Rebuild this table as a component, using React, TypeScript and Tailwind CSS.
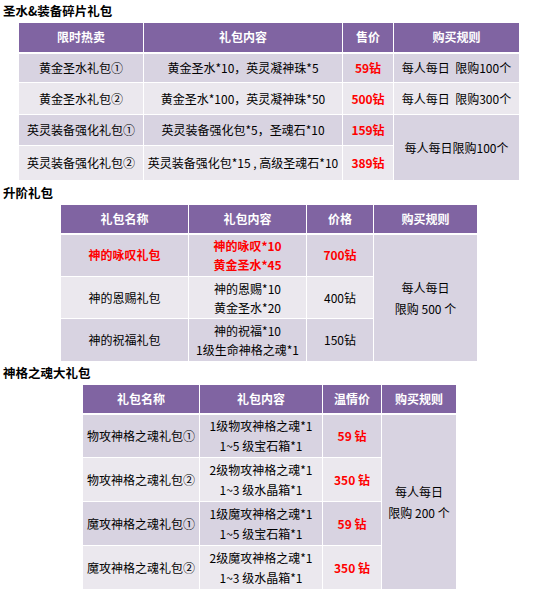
import React from 'react';

const HEAD = 'bg-[#8064a2] text-white font-bold border border-white border-b-2 text-center p-0';
const DARK = 'bg-[#d8d3e1]';
const LIGHT = 'bg-[#ebe8ee]';
const CELL = 'border border-white text-center p-0 whitespace-nowrap';
const RED = 'text-[#ff0000] font-bold';

function Title({ children, h }: { children: React.ReactNode; h: string }) {
  return (
    <div className={`${h} flex items-center pl-[3px] font-bold text-[12.5px] text-black`}>{children}</div>
  );
}

const firstRows = [
  { name: '黄金圣水礼包①', content: '黄金圣水*10，英灵凝神珠*5', price: '59钻', h: 'h-[30px]' },
  { name: '黄金圣水礼包②', content: '黄金圣水*100，英灵凝神珠*50', price: '500钻', h: 'h-[32px]' },
  { name: '英灵装备强化礼包①', content: '英灵装备强化包*5，圣魂石*10', price: '159钻', h: 'h-[31px]' },
  { name: '英灵装备强化礼包②', content: '英灵装备强化包*15 , 高级圣魂石*10', price: '389钻', h: 'h-[35px]' },
];

const upgradeRows = [
  { name: '神的咏叹礼包', lines: ['神的咏叹*10', '黄金圣水*45'], price: '700钻', hot: true, h: 'h-[43px]' },
  { name: '神的恩赐礼包', lines: ['神的恩赐*10', '黄金圣水*20'], price: '400钻', hot: false, h: 'h-[42px]' },
  { name: '神的祝福礼包', lines: ['神的祝福*10', '1级生命神格之魂*1'], price: '150钻', hot: false, h: 'h-[43px]' },
];

const soulRows = [
  { name: '物攻神格之魂礼包①', lines: ['1级物攻神格之魂*1', '1~5 级宝石箱*1'], price: '59 钻' },
  { name: '物攻神格之魂礼包②', lines: ['2级物攻神格之魂*1', '1~3 级水晶箱*1'], price: '350 钻' },
  { name: '魔攻神格之魂礼包①', lines: ['1级魔攻神格之魂*1', '1~5 级宝石箱*1'], price: '59 钻' },
  { name: '魔攻神格之魂礼包②', lines: ['2级魔攻神格之魂*1', '1~3 级水晶箱*1'], price: '350 钻' },
];

export default function App() {
  return (
    <div className="w-[545px] h-[590px] bg-white font-['Microsoft_YaHei','Noto_Sans_CJK_SC',sans-serif] text-[12px] text-black leading-[20px]">
      <Title h="h-[22px]">圣水&amp;装备碎片礼包</Title>
      <table className="ml-[18px] border-collapse table-fixed w-[501px]">
        <colgroup>
          <col className="w-[125px]" />
          <col className="w-[199px]" />
          <col className="w-[51px]" />
          <col className="w-[126px]" />
        </colgroup>
        <thead>
          <tr className="h-[30px]">
            <th className={HEAD}>限时热卖</th>
            <th className={HEAD}>礼包内容</th>
            <th className={HEAD}>售价</th>
            <th className={HEAD}>购买规则</th>
          </tr>
        </thead>
        <tbody>
          {firstRows.map((r, i) => (
            <tr key={r.name} className={`${r.h} ${i % 2 === 0 ? DARK : LIGHT}`}>
              <td className={CELL}>{r.name}</td>
              <td className={CELL}>{r.content}</td>
              <td className={`${CELL} ${RED}`}>{r.price}</td>
              {i === 0 && <td className={CELL}>每人每日&nbsp;&nbsp;限购100个</td>}
              {i === 1 && <td className={CELL}>每人每日&nbsp;&nbsp;限购300个</td>}
              {i === 2 && (
                <td rowSpan={2} className={`${CELL} ${DARK}`}>每人每日限购100个</td>
              )}
            </tr>
          ))}
        </tbody>
      </table>

      <Title h="h-[23px]">升阶礼包</Title>
      <table className="ml-[60px] border-collapse table-fixed w-[417px]">
        <colgroup>
          <col className="w-[128px]" />
          <col className="w-[118px]" />
          <col className="w-[67px]" />
          <col className="w-[104px]" />
        </colgroup>
        <thead>
          <tr className="h-[29px]">
            <th className={HEAD}>礼包名称</th>
            <th className={HEAD}>礼包内容</th>
            <th className={HEAD}>价格</th>
            <th className={HEAD}>购买规则</th>
          </tr>
        </thead>
        <tbody>
          {upgradeRows.map((r, i) => (
            <tr key={r.name} className={`${r.h} ${i % 2 === 0 ? DARK : LIGHT}`}>
              <td className={`${CELL} ${r.hot ? RED : ''}`}>{r.name}</td>
              <td className={`${CELL} ${r.hot ? RED : ''} leading-[19px]`}>
                {r.lines.map((l) => (
                  <div key={l}>{l}</div>
                ))}
              </td>
              <td className={`${CELL} ${r.hot ? RED : ''}`}>{r.price}</td>
              {i === 0 && (
                <td rowSpan={3} className={`${CELL} ${DARK} leading-[21px]`}>
                  <div>每人每日</div>
                  <div>限购 500 个</div>
                </td>
              )}
            </tr>
          ))}
        </tbody>
      </table>

      <Title h="h-[22px]">神格之魂大礼包</Title>
      <table className="ml-[82px] border-collapse table-fixed w-[374px]">
        <colgroup>
          <col className="w-[117px]" />
          <col className="w-[123px]" />
          <col className="w-[59px]" />
          <col className="w-[75px]" />
        </colgroup>
        <thead>
          <tr className="h-[29px]">
            <th className={HEAD}>礼包名称</th>
            <th className={HEAD}>礼包内容</th>
            <th className={HEAD}>温情价</th>
            <th className={HEAD}>购买规则</th>
          </tr>
        </thead>
        <tbody>
          {soulRows.map((r, i) => (
            <tr key={r.name} className={`h-[44px] ${i % 2 === 0 ? DARK : LIGHT}`}>
              <td className={CELL}>{r.name}</td>
              <td className={`${CELL} leading-[20px]`}>
                {r.lines.map((l) => (
                  <div key={l}>{l}</div>
                ))}
              </td>
              <td className={`${CELL} ${RED}`}>{r.price}</td>
              {i === 0 && (
                <td rowSpan={4} className={`${CELL} ${DARK} leading-[21px]`}>
                  <div>每人每日</div>
                  <div>限购 200 个</div>
                </td>
              )}
            </tr>
          ))}
        </tbody>
      </table>
    </div>
  );
}
